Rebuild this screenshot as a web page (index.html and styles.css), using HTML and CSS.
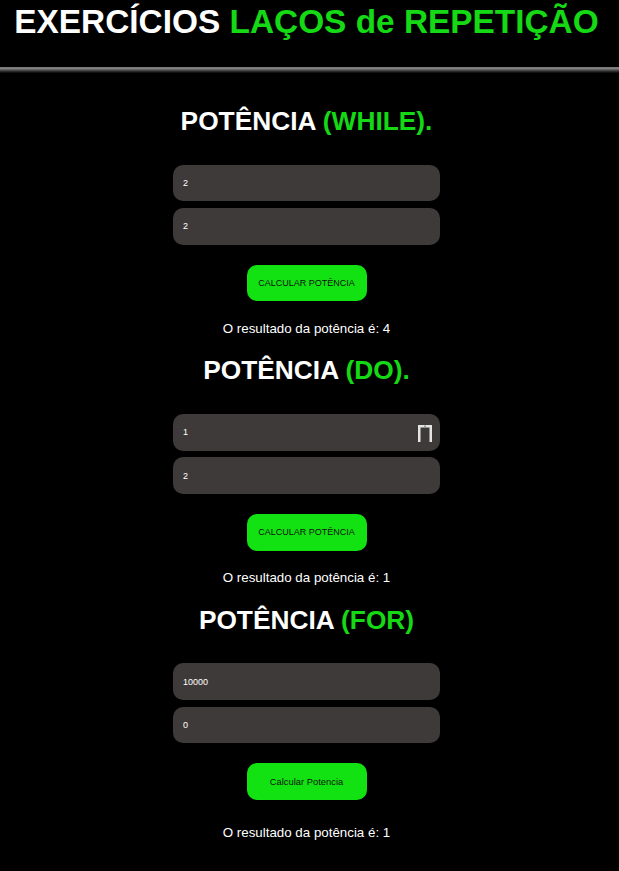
FILE: index.html
```html
<!DOCTYPE html>
<html lang="pt-BR">
<head>
<meta charset="utf-8">
<title>Exercícios Laços de Repetição</title>
<link rel="stylesheet" href="styles.css">
</head>
<body>
<header class="top">
  <h1 class="title">EXERCÍCIOS <span class="green">LAÇOS de REPETIÇÃO</span></h1>
  <div class="rule"></div>
</header>
<main class="main">
  <section class="exercise first">
    <h2 class="heading">POTÊNCIA <span class="green">(WHILE).</span></h2>
    <div class="fields">
      <div class="field"><input class="input" type="text" value="2"></div>
      <div class="field"><input class="input" type="text" value="2"></div>
    </div>
    <button class="btn" type="button">CALCULAR POTÊNCIA</button>
    <p class="result">O resultado da potência é: 4</p>
  </section>
  <section class="exercise">
    <h2 class="heading">POTÊNCIA <span class="green">(DO).</span></h2>
    <div class="fields">
      <div class="field">
        <input class="input" type="text" value="1">
        <svg class="field-icon" width="14" height="17" viewBox="0 0 14 17" aria-hidden="true">
          <path d="M1.25 17 V1.25 H12.75 V17" fill="none" stroke="#e4e4e4" stroke-width="2.5"/>
          <rect x="6" y="0.5" width="2" height="1.5" fill="#9a9a9a"/>
        </svg>
      </div>
      <div class="field"><input class="input" type="text" value="2"></div>
    </div>
    <button class="btn" type="button">CALCULAR POTÊNCIA</button>
    <p class="result">O resultado da potência é: 1</p>
  </section>
  <section class="exercise">
    <h2 class="heading">POTÊNCIA <span class="green">(FOR)</span></h2>
    <div class="fields">
      <div class="field"><input class="input" type="text" value="10000"></div>
      <div class="field"><input class="input" type="text" value="0"></div>
    </div>
    <button class="btn btn-mixed" type="button">Calcular Potencia</button>
    <p class="result result-last">O resultado da potência é: 1</p>
  </section>
</main>
</body>
</html>
```
FILE: styles.css
```css
html, body {
  margin: 0;
  padding: 0;
  background: #000;
}
body {
  font-family: "Liberation Sans", Arial, sans-serif;
  color: #fff;
}
.green {
  color: #14d914;
}
.top {
  display: flex;
  flex-direction: column;
}
.title {
  margin: 3px 6px 0 0;
  font-size: 33.4px;
  font-weight: bold;
  text-align: center;
  line-height: 38px;
  white-space: nowrap;
}
.rule {
  margin-top: 26px;
  height: 6px;
  background: linear-gradient(to bottom, #6a6a6a 0%, #8c8c8c 18%, #5e5e5e 45%, #2a2a2a 75%, #050505 100%);
}
.main {
  padding-right: 6px;
  display: flex;
  flex-direction: column;
  align-items: center;
}
.exercise {
  display: flex;
  flex-direction: column;
  align-items: center;
  width: 267px;
}
.heading {
  margin: 19.3px 0 28.5px;
  font-size: 26.3px;
  font-weight: bold;
  line-height: 30px;
  white-space: nowrap;
}
.first .heading {
  margin-top: 33px;
}
.fields {
  display: flex;
  flex-direction: column;
  gap: 6.6px;
  width: 100%;
}
.field {
  position: relative;
}
.input {
  display: block;
  box-sizing: border-box;
  width: 100%;
  height: 36.8px;
  padding: 0 10px;
  border: none;
  border-radius: 10px;
  background: #3f3a3a;
  color: #fff;
  font-family: "Liberation Sans", Arial, sans-serif;
  font-size: 9px;
  outline: none;
}
.field-icon {
  position: absolute;
  right: 8px;
  top: 11px;
}
.btn {
  margin-top: 20px;
  width: 120px;
  height: 36.8px;
  border: none;
  border-radius: 10px;
  background: #12e212;
  color: #111;
  font-family: "Liberation Sans", Arial, sans-serif;
  font-size: 9px;
  padding: 0;
}
.btn-mixed {
  font-size: 9.4px;
}
.result {
  margin: 19.3px 0 0;
  font-size: 13.33px;
  line-height: 15.3px;
  white-space: nowrap;
}
.result-last {
  margin-top: 24.5px;
}
```
